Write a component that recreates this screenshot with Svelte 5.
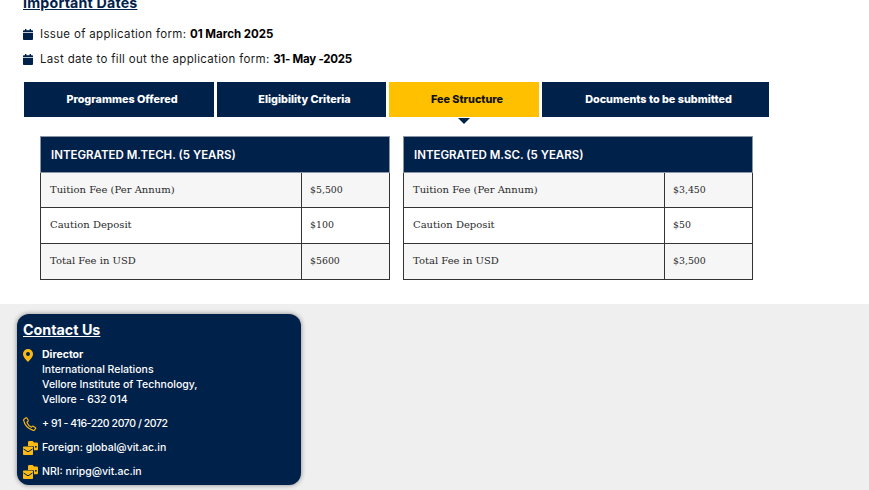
<script>
  const tabs = [
    { label: 'Programmes Offered', width: 190 },
    { label: 'Eligibility Criteria', width: 169 },
    { label: 'Fee Structure', width: 150, active: true },
    { label: 'Documents to be submitted', width: 227 }
  ];
  const tables = [
    { title: 'INTEGRATED M.TECH. (5 YEARS)', rows: [['Tuition Fee (Per Annum)', '$5,500'], ['Caution Deposit', '$100'], ['Total Fee in USD', '$5600']] },
    { title: 'INTEGRATED M.SC. (5 YEARS)', rows: [['Tuition Fee (Per Annum)', '$3,450'], ['Caution Deposit', '$50'], ['Total Fee in USD', '$3,500']] }
  ];
</script>

{#snippet calendar()}
  <svg class="cal" viewBox="0 0 10 11" width="10" height="11" aria-hidden="true">
    <path fill="#00214a" d="M2 0h1.400v1.300h3.200V0H8v1.300h1.200c.5 0 .8.400.8.800v1.100H0V2.100c0-.4.300-.8.800-.8H2zM0 4h10v6c0 .5-.4 1-1 1H1c-.6 0-1-.5-1-1z"/>
  </svg>
{/snippet}

{#snippet mail()}
  <svg class="ic" viewBox="0 0 15 14" width="15" height="14" aria-hidden="true">
    <path fill="#fdb913" d="M5 1.500C5 .7 5.600 0 6.400 0h3.200l1.400 1.500h2.700c.7 0 1.300.6 1.300 1.300V8c0 .8-.6 1.300-1.300 1.300H11V6.500c0-.8-.6-1.500-1.400-1.500H5z"/>
    <path fill="#fdb913" d="M0 6.500c0-.6.500-1 1-1h8c.6 0 1 .4 1 1V13c0 .6-.4 1-1 1H1c-.5 0-1-.4-1-1z"/>
    <path fill="none" stroke="#00214a" stroke-width="1" d="M.5 8l4.500 2.800L9.500 8"/>
    <rect x="12" y="5" width="1.600" height="1.600" fill="#00214a"/>
  </svg>
{/snippet}

<div class="page">
  <section class="top">
    <h2>Important Dates</h2>
    <p class="date">{@render calendar()}<span>Issue of application form: <b>01 March 2025</b></span></p>
    <p class="date">{@render calendar()}<span>Last date to fill out the application form: <b>31- May -2025</b></span></p>

    <div class="tabs">
      {#each tabs as t}
        <div class="tab" class:active={t.active} style="width:{t.width}px">{t.label}</div>
      {/each}
    </div>

    <div class="tables">
      {#each tables as t}
        <table>
          <colgroup><col class="c1"><col class="c2"></colgroup>
          <thead><tr><th colspan="2">{t.title}</th></tr></thead>
          <tbody>
            {#each t.rows as r}
              <tr><td>{r[0]}</td><td class="val">{r[1]}</td></tr>
            {/each}
          </tbody>
        </table>
      {/each}
    </div>
  </section>

  <footer>
    <div class="card">
      <h3>Contact Us</h3>
      <div class="row addr">
        <svg class="ic pin" viewBox="0 0 10 13" width="10" height="13" aria-hidden="true">
          <path fill="#fdb913" fill-rule="evenodd" d="M5 0a5 5 0 0 1 5 5c0 3-3.500 6.500-5 8C3.500 11.500 0 8 0 5a5 5 0 0 1 5-5zm0 3a2 2 0 1 0 0 4 2 2 0 0 0 0-4z"/>
        </svg>
        <div><b>Director</b><br>International Relations<br>Vellore Institute of Technology,<br>Vellore - 632 014</div>
      </div>
      <div class="row phone">
        <svg class="ic" viewBox="0 0 14 14" width="14" height="14" aria-hidden="true">
          <path fill="none" stroke="#fdb913" stroke-width="1.100" stroke-linejoin="round" d="M1 2.200 3 .8c.4-.2.700-.1.900.2l1.300 2.300c.2.300.1.600-.1.800L4.200 5c-.2.200-.2.500-.1.700.7 1.700 2 3.200 3.800 4.300.3.200.5.100.7 0l.9-.8c.3-.2.600-.2.800 0l2.200 1.500c.3.200.4.600.1.900l-1.300 1.500c-.3.300-.7.400-1.100.3C5.500 12 1.500 8 .6 3.200c-.1-.4.100-.8.400-1z"/>
        </svg>
        <div class="tel">+ 91 - 416-220 2070 / 2072</div>
      </div>
      <div class="row mail">{@render mail()}<div>Foreign: global@vit.ac.in</div></div>
      <div class="row mail">{@render mail()}<div>NRI: nripg@vit.ac.in</div></div>
    </div>
  </footer>
</div>

<style>
  :global(body) { margin: 0; background: #fff; }
  .page { width: 869px; height: 490px; overflow: hidden; font-family: "Inter", "Liberation Sans", sans-serif; color: #111; }
  .top { display: flow-root; height: 304px; padding-left: 24px; box-sizing: border-box; }
  h2 { margin: -7px 0 0 -1px; font-size: 14.200px; line-height: 20px; font-weight: 700; color: #00214a; text-decoration: underline; letter-spacing: .2px; }
  .date { margin: 0 0 0 -1px; display: flex; align-items: center; gap: 7px; height: 18px; font-size: 11.500px; letter-spacing: .33px; color: #1a1a1a; }
  h2 + .date { margin-top: 12px; }
  .date + .date { margin-top: 7px; }
  .date b { color: #000; font-weight: 700; letter-spacing: 0; }
  .date + .date b { letter-spacing: -.25px; }
  .cal { flex: none; }
  .tabs { display: flex; gap: 3px; margin-top: 14px; }
  .tab { height: 35px; box-sizing: border-box; padding: 0 0 1px 6px; display: flex; align-items: center; justify-content: center; background: #00214a; color: #fff; font-size: 10.800px; font-weight: 800; position: relative; }
  .tab.active { background: #ffc000; color: #111; }
  .tab.active::after { content: ''; position: absolute; top: 36px; left: 69px; border: 6px solid transparent; border-top: 6px solid #00214a; border-bottom: 0; }
  .tables { display: flex; gap: 13px; margin: 19px 0 0 16px; align-items: flex-start; }
  table { width: 349px; border-collapse: collapse; table-layout: fixed; font-family: "DejaVu Serif", "Liberation Serif", serif; font-size: 10px; color: #2a2a2a; }
  .c1 { width: 261px; }
  .c2 { width: 88px; }
  th { height: 36px; box-sizing: border-box; padding: 0 10px; text-align: left; background: #00214a; color: #fff; font-family: "Inter", "Liberation Sans", sans-serif; font-size: 11.500px; font-weight: 600; border: 1px solid #8a94a3; }
  td { height: 36px; box-sizing: border-box; padding: 0 9px 2px; border: 1px solid #333; }
  tbody tr:first-child td { height: 35px; }
  td.val { font-size: 9.400px; padding-left: 8px; }
  tbody tr:nth-child(odd) td { background: #f6f6f6; }
  footer { height: 186px; background: #efefef; padding: 10px 0 0 17px; box-sizing: border-box; }
  .card { width: 284px; height: 171px; box-sizing: border-box; padding: 8px 6px; background: #00214a; border-radius: 12px; box-shadow: 0 0 5px rgba(0,0,0,.45); color: #fff; font-size: 10.500px; line-height: 15px; font-weight: 500; }
  h3 { margin: 0; font-size: 14.300px; line-height: 16px; font-weight: 700; text-decoration: underline; }
  .row { display: flex; gap: 4px; }
  .ic { flex: none; }
  .addr { margin-top: 9px; gap: 9px; }
  .addr .pin { margin-top: 2px; }
  .addr b { font-weight: 700; }
  .phone { margin-top: 9px; align-items: center; gap: 5px; }
  .tel { letter-spacing: -.42px; }
  .mail { margin-top: 9px; align-items: center; }
</style>
